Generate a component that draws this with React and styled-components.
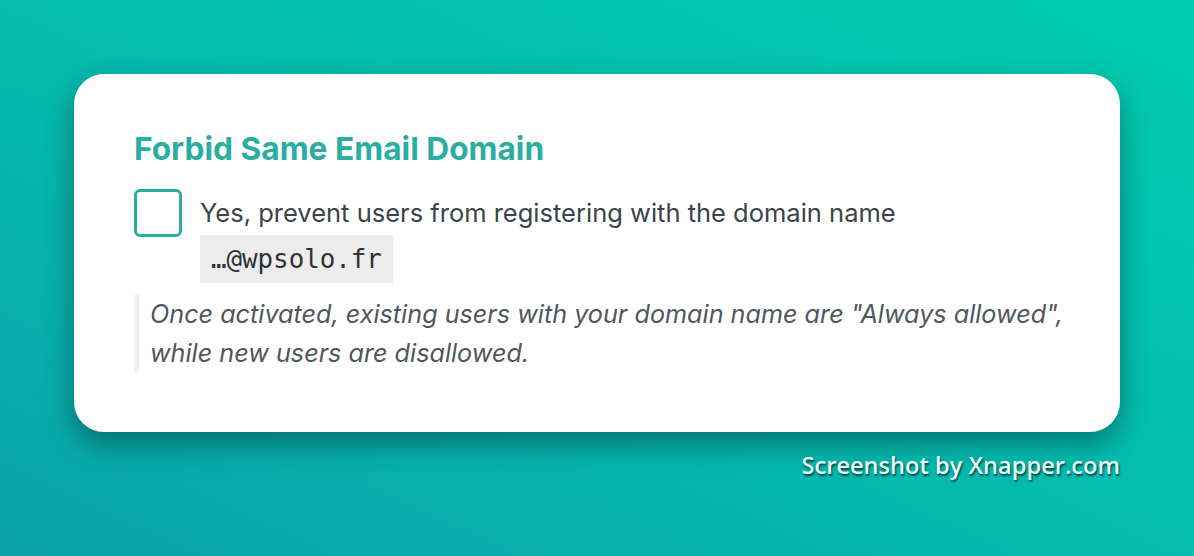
import React from 'react';
import styled, { createGlobalStyle } from 'styled-components';

const GlobalStyle = createGlobalStyle`
    html, body {
        margin: 0;
        padding: 0;
    }
    body {
        font-family: Inter, "Noto Sans", sans-serif;
    }
`;

const App = () => {
    return (
        <StyledPage>
            <GlobalStyle />
            <StyledCard>
                <StyledTitle>Forbid Same Email Domain</StyledTitle>
                <StyledOption>
                    <StyledCheckbox type="checkbox" />
                    <StyledLabel>
                        Yes, prevent users from registering with the domain name{' '}
                        <StyledCode>…@wpsolo.fr</StyledCode>
                    </StyledLabel>
                </StyledOption>
                <StyledNote>
                    Once activated, existing users with your domain name are "Always allowed",
                    while new users are disallowed.
                </StyledNote>
            </StyledCard>
            <StyledCredit>Screenshot by Xnapper.com</StyledCredit>
        </StyledPage>
    );
};

export default App;

const StyledPage = styled.div`
    box-sizing: border-box;
    width: 1194px;
    height: 556px;
    padding: 74px 74px 0;
    display: flex;
    flex-direction: column;
    background: linear-gradient(to top right, #0aa3aa, #04b9ae 45%, #00cdb0);
    overflow: hidden;
`;

const StyledCard = styled.div`
    box-sizing: border-box;
    height: 358px;
    padding: 56px 48px 0 60px;
    background: #fff;
    border-radius: 30px;
    box-shadow: 0 12px 28px rgba(0, 40, 40, 0.45);
`;

const StyledTitle = styled.h2`
    margin: 0 0 21px;
    font-size: 31.7px;
    line-height: 38px;
    font-weight: 700;
    color: #2aaea2;
`;

const StyledOption = styled.div`
    display: flex;
    align-items: flex-start;
    gap: 18px;
`;

const StyledCheckbox = styled.input`
    appearance: none;
    flex: none;
    box-sizing: border-box;
    width: 48px;
    height: 48px;
    margin: 0;
    border: 3px solid #2aaea2;
    border-radius: 6px;
    background: #fff;
`;

const StyledLabel = styled.label`
    margin-top: 2px;
    font-size: 25.5px;
    line-height: 44px;
    color: #3c434a;
`;

const StyledCode = styled.code`
    display: inline-block;
    vertical-align: middle;
    padding: 0 11px;
    line-height: 48px;
    font-family: "DejaVu Sans Mono", "Liberation Mono", monospace;
    font-size: 25.8px;
    background: #ececec;
    color: #2c3338;
`;

const StyledNote = styled.p`
    margin: 12px 0 0;
    padding: 0 0 0 11px;
    border-left: 5px solid #f0f0f1;
    font-size: 25.2px;
    line-height: 39px;
    font-style: italic;
    color: #50575e;
`;

const StyledCredit = styled.div`
    margin-top: 18px;
    align-self: flex-end;
    font-family: "Open Sans", "Liberation Sans", sans-serif;
    font-size: 23.6px;
    line-height: 30px;
    font-weight: 600;
    color: #e6faf6;
    text-shadow: 1px 2px 2px rgba(0, 20, 20, 0.7);
`;
